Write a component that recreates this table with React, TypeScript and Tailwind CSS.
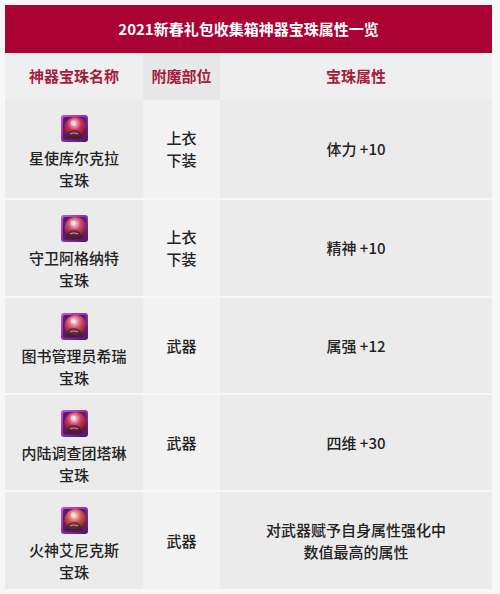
import React from "react";

type Row = {
  name: string[];
  slot: string[];
  attr: string[];
  h: number;
  hue: string;
};

const rows: Row[] = [
  { name: ["星使库尔克拉", "宝珠"], slot: ["上衣", "下装"], attr: ["体力 +10"], h: 98, hue: "#d0305a" },
  { name: ["守卫阿格纳特", "宝珠"], slot: ["上衣", "下装"], attr: ["精神 +10"], h: 96, hue: "#c84a6a" },
  { name: ["图书管理员希瑞", "宝珠"], slot: ["武器"], attr: ["属强 +12"], h: 95, hue: "#d8506a" },
  { name: ["内陆调查团塔琳", "宝珠"], slot: ["武器"], attr: ["四维 +30"], h: 95, hue: "#d03a58" },
  { name: ["火神艾尼克斯", "宝珠"], slot: ["武器"], attr: ["对武器赋予自身属性强化中", "数值最高的属性"], h: 97, hue: "#d85a48" },
];

function GemIcon({ id, hue }: { id: number; hue: string }) {
  return (
    <svg width="27" height="27" viewBox="0 0 27 27">
      <defs>
        <linearGradient id={`bd${id}`} x1="0" y1="0" x2="1" y2="1">
          <stop offset="0" stopColor="#d04fe0" />
          <stop offset="1" stopColor="#4a1466" />
        </linearGradient>
        <radialGradient id={`gm${id}`} cx="0.45" cy="0.3" r="0.75">
          <stop offset="0" stopColor="#ffe0ea" />
          <stop offset="0.4" stopColor={hue} />
          <stop offset="1" stopColor="#4a0c28" />
        </radialGradient>
      </defs>
      <rect x="0" y="0" width="27" height="27" rx="3" fill={`url(#bd${id})`} />
      <rect x="2" y="2" width="23" height="23" rx="2" fill="#5a1a70" />
      <circle cx="14.5" cy="13" r="11" fill={`url(#gm${id})`} />
      <path d="M4 24 Q7 14 13 15 Q19 14 22 24 Z" fill="#3a2030" opacity="0.6" />
      <path d="M9 19 Q13 17 17 19" stroke="#e8d0c8" strokeWidth="1.2" fill="none" opacity="0.7" />
      <circle cx="12" cy="8" r="2.4" fill="#fff" opacity="0.55" />
    </svg>
  );
}

export default function App() {
  return (
    <div
      className="w-[500px] h-[594px] bg-[#f7f7f7] pt-[5px] pl-[5px] overflow-hidden"
      style={{ fontFamily: '"Noto Sans CJK SC", "Noto Sans", sans-serif' }}
    >
      <div className="w-[487px]">
        <div className="h-[48px] bg-[#aa0233] flex items-center justify-center text-white text-[15px] font-bold">
          2021新春礼包收集箱神器宝珠属性一览
        </div>
        <div className="flex h-[47px] text-[#a61b3d] text-[15px] font-bold">
          <div className="w-[138px] bg-[#efefef] flex items-center justify-center">神器宝珠名称</div>
          <div className="w-[77px] bg-[#e8e8e8] flex items-center justify-center">附魔部位</div>
          <div className="flex-1 bg-[#efefef] flex items-center justify-center">宝珠属性</div>
        </div>
        {rows.map((r, i) => (
          <div
            key={i}
            className={`flex text-[#222222] text-[15px] font-medium leading-[22px] ${i > 0 ? "mt-[2px]" : ""}`}
            style={{ height: r.h }}
          >
            <div className="w-[138px] bg-[#ebebeb] flex flex-col items-center pt-[15px]">
              <GemIcon id={i} hue={r.hue} />
              <div className="mt-[5px] text-center">
                {r.name.map((l) => (
                  <div key={l}>{l}</div>
                ))}
              </div>
            </div>
            <div className="w-[77px] bg-[#f2f2f2] flex flex-col items-center justify-center">
              {r.slot.map((l) => (
                <div key={l}>{l}</div>
              ))}
            </div>
            <div className="flex-1 bg-[#ebebeb] flex flex-col items-center justify-center">
              {r.attr.map((l) => (
                <div key={l}>{l}</div>
              ))}
            </div>
          </div>
        ))}
      </div>
    </div>
  );
}
